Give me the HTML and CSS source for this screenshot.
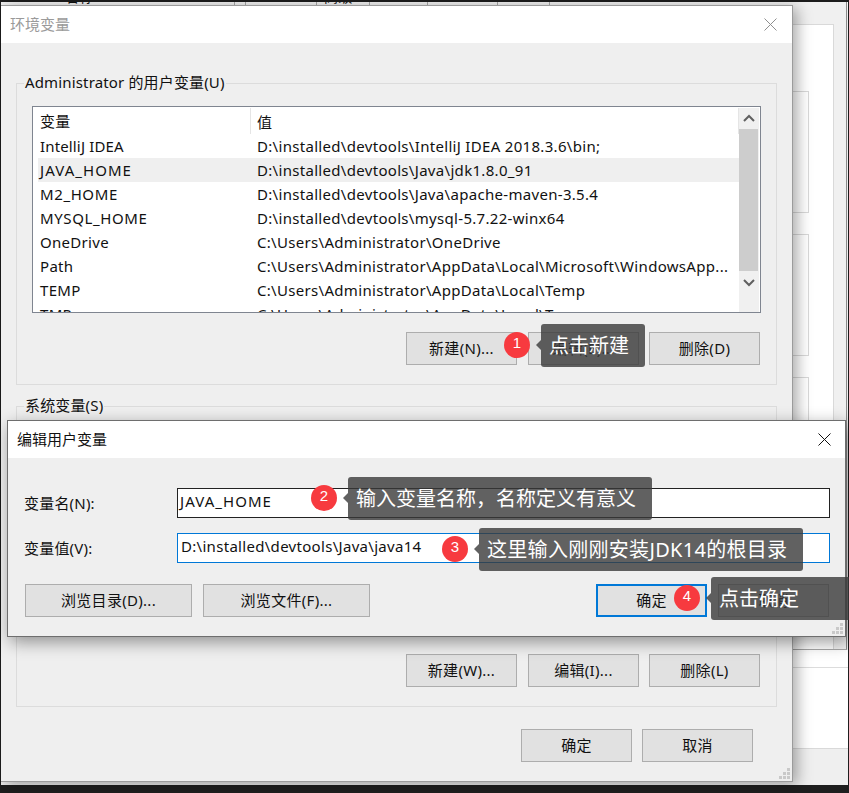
FILE: index.html
```html
<!DOCTYPE html>
<html lang="zh-CN">
<head>
<meta charset="utf-8">
<title>环境变量</title>
<link rel="stylesheet" href="styles.css">
</head>
<body>
<div class="desktop">
  <div class="sys-window">
    <div class="tabstrip">
      <span class="tab tab-a"><span class="tab-text">名称</span></span>
      <span class="tab tab-b"></span>
      <span class="tab tab-c"></span>
      <span class="tab tab-d"><span class="tab-text">高级</span></span>
      <span class="tab tab-e"></span>
      <span class="tab tab-f"></span>
      <span class="tab tab-g"></span>
    </div>
    <div class="panel">
      <div class="box"></div>
      <div class="box"></div>
      <div class="box box-last"></div>
    </div>
  </div>
  <div class="lower-white"></div>
  <div class="lower-gray">
    <div class="footstrip"><span class="foot-text">系统属性设置</span></div>
  </div>

  <section class="win env-win">
    <header class="titlebar">
      <span class="title title-muted">环境变量</span>
      <svg class="close close-muted" viewBox="0 0 13 13"><path d="M0.5 0.5L12.5 12.5M12.5 0.5L0.5 12.5"/></svg>
    </header>
    <div class="env-body">
      <div class="group">
        <span class="legend">Administrator 的用户变量(U)</span>
        <div class="list">
          <div class="list-main">
            <div class="list-head">
              <span class="col-name">变量</span>
              <span class="col-value">值</span>
            </div>
            <div class="row"><span class="col-name name-tight">IntelliJ IDEA</span><span class="col-value">D:\installed\devtools\IntelliJ IDEA 2018.3.6\bin;</span></div>
            <div class="row row-selected"><span class="col-name caps-wide">JAVA_HOME</span><span class="col-value">D:\installed\devtools\Java\jdk1.8.0_91</span></div>
            <div class="row"><span class="col-name caps">M2_HOME</span><span class="col-value">D:\installed\devtools\Java\apache-maven-3.5.4</span></div>
            <div class="row"><span class="col-name caps">MYSQL_HOME</span><span class="col-value">D:\installed\devtools\mysql-5.7.22-winx64</span></div>
            <div class="row"><span class="col-name">OneDrive</span><span class="col-value">C:\Users\Administrator\OneDrive</span></div>
            <div class="row"><span class="col-name">Path</span><span class="col-value">C:\Users\Administrator\AppData\Local\Microsoft\WindowsApp...</span></div>
            <div class="row"><span class="col-name">TEMP</span><span class="col-value">C:\Users\Administrator\AppData\Local\Temp</span></div>
            <div class="row"><span class="col-name">TMP</span><span class="col-value">C:\Users\Administrator\AppData\Local\Temp</span></div>
          </div>
          <div class="scrollbar">
            <svg class="chevron" viewBox="0 0 20 20"><path d="M5 13L10 8L15 13"/></svg>
            <div class="thumb"></div>
            <svg class="chevron" viewBox="0 0 20 20"><path d="M5 8L10 13L15 8"/></svg>
          </div>
        </div>
        <div class="btn-row">
          <button class="btn">新建(N)...</button>
          <button class="btn">编辑(E)...</button>
          <button class="btn">删除(D)</button>
        </div>
      </div>
      <div class="group group-second">
        <span class="legend">系统变量(S)</span>
        <div class="btn-row">
          <button class="btn">新建(W)...</button>
          <button class="btn">编辑(I)...</button>
          <button class="btn">删除(L)</button>
        </div>
      </div>
      <div class="env-actions">
        <button class="btn">确定</button>
        <button class="btn">取消</button>
      </div>
    </div>
    <svg class="grip" viewBox="0 0 11 11"><path d="M8 0h3v3H8zM4 4h3v3H4zM8 4h3v3H8zM0 8h3v3H0zM4 8h3v3H4zM8 8h3v3H8z"/></svg>
  </section>

  <section class="win edit-win">
    <header class="titlebar">
      <span class="title">编辑用户变量</span>
      <svg class="close" viewBox="0 0 13 13"><path d="M0.5 0.5L12.5 12.5M12.5 0.5L0.5 12.5"/></svg>
    </header>
    <div class="edit-body">
      <div class="form">
        <label class="label">变量名(N):</label>
        <div class="input input-name">JAVA_HOME</div>
        <label class="label">变量值(V):</label>
        <div class="input input-focus">D:\installed\devtools\Java\java14</div>
      </div>
      <div class="edit-actions">
        <button class="btn btn-wide">浏览目录(D)...</button>
        <button class="btn btn-wide">浏览文件(F)...</button>
        <button class="btn btn-default">确定</button>
        <button class="btn">取消</button>
      </div>
    </div>
    <svg class="grip" viewBox="0 0 11 11"><path d="M8 0h3v3H8zM4 4h3v3H4zM8 4h3v3H8zM0 8h3v3H0zM4 8h3v3H4zM8 8h3v3H8z"/></svg>
  </section>

  <div class="callout callout-1"><span class="badge">1</span><span class="tip">点击新建</span></div>
  <div class="callout callout-2"><span class="badge">2</span><span class="tip">输入变量名称，名称定义有意义</span></div>
  <div class="callout callout-3"><span class="badge">3</span><span class="tip tip-wide">这里输入刚刚安装JDK14的根目录</span></div>
  <div class="callout callout-4"><span class="badge">4</span><span class="tip tip-edge">点击确定</span></div>
</div>
</body>
</html>
```
FILE: styles.css
```css
* { box-sizing: border-box; }
html, body { margin: 0; height: 100%; overflow: hidden; }
body {
  background: #1e1e1e;
  color: #111;
  font-family: "Noto Sans", "Noto Sans CJK SC", sans-serif;
  font-size: 15px;
  letter-spacing: .3px;
}
button { font: inherit; color: inherit; padding: 0 0 2px; letter-spacing: inherit; }

/* desktop behind the dialogs */
.desktop {
  position: relative;
  margin: 2px 1px 0;
  height: 783px;
  background: #fff;
  display: flex;
  flex-direction: column;
}
.sys-window {
  height: 648px;
  background: #f0f0f0;
  border-bottom: 1px solid #a8a8a8;
  margin-right: 1px;
  border-right: 1px solid #8a8a8a;
  box-shadow: 0 3px 12px rgba(0, 0, 0, .15);
  display: flex;
  flex-direction: column;
}
.tabstrip { display: flex; height: 3px; overflow: hidden; font-size: 14px; }
.tab { display: block; border-right: 1px solid #a8a8a8; overflow: hidden; }
.tab-text { display: block; margin-top: -15px; line-height: 20px; }
.tab-a { width: 234px; padding-left: 64px; }
.tab-b { width: 11px; }
.tab-c { width: 71px; }
.tab-d { width: 53px; }
.tab-e { width: 58px; padding-left: 8px; }
.tab-f { width: 70px; }
.tab-g { width: 52px; }
.tab-d .tab-text { padding-left: 7px; }
.panel {
  align-self: flex-end;
  margin: 19px 12px 0 0;
  width: 54px;
  height: 625px;
  background: #fff;
  border: 1px solid #d9d9d9;
  border-bottom: 0;
  padding-top: 66px;
  display: flex;
  flex-direction: column;
  gap: 21px;
  overflow: hidden;
}
.box { width: 28px; height: 122px; background: #fff; border: 1px solid #d9d9d9; flex: none; }
.box-last { margin-top: 0; }
.lower-white { height: 99px; background: #fff; border-bottom: 1px solid #d9d9d9; flex: none; position: relative; }
.lower-white::before { content: ""; display: block; height: 17px; border-bottom: 1px solid #dcdcdc; }
.lower-gray { flex: 1; background: #efefef; display: flex; flex-direction: column; justify-content: flex-end; }
.footstrip { height: 3px; overflow: hidden; padding-left: 352px; }
.foot-text { display: block; line-height: 20px; font-size: 14px; color: #5a6ea0; }

/* windows */
.win { position: absolute; background: #efefef; }
.env-win {
  left: 0; top: 3px;
  width: 792px; height: 777px;
  border: 1px solid #9b9b9b;
  border-left: 0;
  box-shadow: 4px 3px 14px rgba(0, 0, 0, .35);
}
.edit-win {
  left: 6px; top: 418px;
  width: 839px; height: 217px;
  border: 1px solid #6e6e6e;
  box-shadow: 3px 5px 16px rgba(0, 0, 0, .4);
}
.titlebar {
  position: relative;
  height: 37px;
  background: #fff;
  display: flex;
  align-items: center;
  justify-content: space-between;
  padding: 0 15px 0 9px;
}
.title { font-size: 15px; letter-spacing: 0; margin-top: -2px; }
.title-muted { color: #9a9a9a; }
.close { width: 13px; height: 13px; fill: none; stroke: #111; stroke-width: 1; }
.close-muted { stroke: #8f8f8f; }
.edit-win .titlebar { padding-right: 14px; }
.grip { position: absolute; right: 2px; bottom: 2px; width: 11px; height: 11px; fill: #c9c9c9; }

/* groups */
.env-body { padding: 40px 0 0 15px; }
.group {
  position: relative;
  width: 761px;
  height: 302px;
  border: 1px solid #dcdcdc;
  padding: 22px 16px 19px 15px;
  display: flex;
  flex-direction: column;
}
.group-second { margin-top: 21px; height: 301px; }
.legend {
  position: absolute;
  left: 7px; top: -12px;
  height: 20px;
  line-height: 20px;
  background: #efefef;
  padding: 0 1px;
  letter-spacing: .15px;
}
.list {
  width: 729px;
  height: 207px;
  background: #fff;
  border: 1px solid #7f8590;
  display: flex;
  flex: none;
  overflow: hidden;
}
.list-main { width: 706px; padding: 1px 0 0 5px; flex: none; }
.list-head {
  height: 26px;
  display: flex;
  align-items: center;
  border-right: 1px solid #e5e5e5;
}
.list-head .col-name { border-right: 1px solid #e5e5e5; height: 26px; line-height: 26px; }
.row { height: 24px; line-height: 24px; display: flex; white-space: nowrap; }
.row-selected { background: #efefef; }
.col-name { width: 213px; padding-left: 2px; flex: none; }
.col-value { padding-left: 6px; letter-spacing: .31px; }
.name-tight { letter-spacing: .15px; }
.caps { letter-spacing: .6px; }
.caps-wide { letter-spacing: 1.05px; }
.scrollbar {
  width: 20px;
  margin: 1px 0 0 0;
  height: 204px;
  background: #f0f0f0;
  display: flex;
  flex-direction: column;
}
.chevron { width: 20px; height: 20px; flex: none; fill: none; stroke: #606060; stroke-width: 2; }
.thumb { height: 142px; margin: 1px 1px 1px 0; background: #cdcdcd; flex: none; }
.btn-row { margin-top: auto; display: flex; justify-content: flex-end; gap: 10px; }
.btn-row .btn:nth-child(2) { margin-left: 1px; }
.btn {
  width: 111px;
  height: 33px;
  background: #e1e1e1;
  border: 1px solid #adadad;
  flex: none;
}
.env-actions {
  width: 737px;
  margin-top: 22px;
  display: flex;
  justify-content: flex-end;
  gap: 10px;
}

/* edit dialog */
.edit-body { padding: 30px 15px 0 16px; }
.form { display: grid; grid-template-columns: 153px 653px; row-gap: 15px; align-items: center; }
.label { margin-top: -2px; letter-spacing: .2px; }
.input {
  height: 30px;
  background: #fff;
  border: 1px solid #222;
  padding-left: 2px;
  line-height: 24px;
  white-space: nowrap;
}
.input-name { letter-spacing: 1.05px; }
.input-focus { border-color: #0078d7; padding-left: 3px; }
.edit-actions { margin: 21px 0 0 1px; display: flex; gap: 11px; }
.btn-wide { width: 167px; }
.btn-default { margin-left: auto; border: 2px solid #0078d7; }
.edit-actions .btn:last-child { margin-right: 1px; }

/* callouts */
.callout { position: absolute; display: flex; align-items: center; gap: 11px; letter-spacing: 0; }
.callout-1 { left: 503px; top: 322px; }
.callout-2 { left: 310px; top: 475px; }
.callout-3 { left: 441px; top: 526px; }
.callout-4 { left: 673px; top: 575px; }
.badge {
  width: 26px;
  height: 26px;
  flex: none;
  border-radius: 50%;
  background: #f73a3f;
  color: #fff;
  font-family: "Liberation Sans", sans-serif;
  font-size: 15px;
  line-height: 22px;
  text-align: center;
  margin-top: -2px;
}
.tip {
  position: relative;
  height: 43px;
  line-height: 44px;
  padding: 0 16px 0 8px;
  background: rgba(58, 58, 58, .8);
  border-radius: 3px;
  color: #fff;
  font-size: 20px;
  white-space: nowrap;
}
.tip::before {
  content: "";
  position: absolute;
  left: -5px; top: 16px;
  border: 5px solid transparent;
  border-left-width: 0;
  border-right-color: rgba(58, 58, 58, .8);
}
.tip-wide { letter-spacing: .3px; }
.tip-edge { width: 138px; border-radius: 3px 0 0 3px; }
```
